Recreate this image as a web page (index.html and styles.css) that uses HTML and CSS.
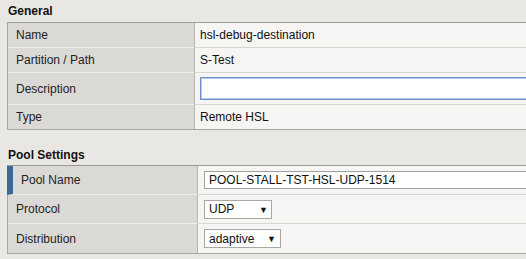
FILE: index.html
```html
<!DOCTYPE html>
<html>
<head>
<meta charset="utf-8">
<link rel="stylesheet" href="styles.css">
</head>
<body>
<div class="page">
  <h2 class="section-title">General</h2>
  <div class="props">
    <div class="row"><div class="label">Name</div><div class="value">hsl-debug-destination</div></div>
    <div class="row"><div class="label">Partition / Path</div><div class="value">S-Test</div></div>
    <div class="row row-tall"><div class="label">Description</div><div class="value"><div class="text-input focus"></div></div></div>
    <div class="row"><div class="label">Type</div><div class="value">Remote HSL</div></div>
  </div>

  <h2 class="section-title second">Pool Settings</h2>
  <div class="props pool">
    <div class="row row-pool"><div class="label required">Pool Name</div><div class="value"><div class="text-input plain">POOL-STALL-TST-HSL-UDP-1514</div></div></div>
    <div class="row row-pool"><div class="label">Protocol</div><div class="value"><div class="select sel-udp"><span>UDP</span><span class="arrow">▼</span></div></div></div>
    <div class="row row-pool"><div class="label">Distribution</div><div class="value"><div class="select sel-dist"><span>adaptive</span><span class="arrow">▼</span></div></div></div>
  </div>
</div>
</body>
</html>
```
FILE: styles.css
```css
* { box-sizing: border-box; }
html, body { margin: 0; padding: 0; }
body {
  background: #e9e7e4;
  font-family: "Liberation Sans", Arial, sans-serif;
  font-size: 12px;
  color: #111;
  overflow: hidden;
  width: 526px;
  height: 259px;
}
.page {
  padding: 0 0 0 7px;
  width: 526px;
  overflow: hidden;
}
.section-title {
  margin: 0;
  font-size: 12px;
  font-weight: bold;
  height: 22px;
  line-height: 22px;
  padding-left: 1px;
  color: #111;
}
.section-title.second {
  margin-top: 19px;
  height: 12px;
  line-height: 12px;
}
.props {
  width: 600px;
  border-top: 1px solid #9d9b98;
  border-left: 1px solid #a9a7a4;
  border-bottom: 1px solid #a9a7a4;
  display: grid;
  grid-template-columns: 187px 1fr;
}
.pool { grid-template-columns: 190px 1fr; margin-top: 4px; }
.row { display: contents; }
.label, .value {
  height: 25px;
  display: flex;
  align-items: center;
  border-bottom: 1px solid #f1f0ee;
}
.label {
  background: #dbd9d6;
  padding-left: 8px;
  color: #222;
  border-right: 1px solid #b9b7b4;
  border-bottom-color: #eeedeb;
}
.value {
  background: #f6f5f3;
  padding-left: 5px;
  border-bottom-color: #d9d6d2;
  color: #111;
}
.row:last-child .label, .row:last-child .value { border-bottom: none; height: 24px; }
.row-tall .label, .row-tall .value { height: 32px; }
.row-pool .label, .row-pool .value { height: 29px; }
.pool .row:last-child .label, .pool .row:last-child .value { height: 29px; }
.pool .value { padding-left: 6px; }
.label.required {
  border-left: 6px solid #3c6898;
  padding-left: 8px;
  margin-left: -1px;
}
.text-input {
  height: 23px;
  width: 400px;
  background: #fff;
}
.text-input.focus {
  border: 1px solid #6b8fc6;
  box-shadow: inset 0 0 0 1px #b7c9e8;
}
.text-input.plain {
  height: 18px;
  border: 1px solid #a3a19e;
  padding-left: 4px;
  line-height: 16px;
  font-size: 12px;
  color: #111;
}
.select {
  height: 19px;
  border: 1px solid #a9a7a4;
  background: #fff;
  display: flex;
  align-items: center;
  padding-left: 4px;
  font-size: 12px;
  position: relative;
}
.select .arrow {
  position: absolute;
  font-size: 9px;
  top: 4px;
}
.sel-udp { width: 68px; }
.sel-udp .arrow { left: 54px; }
.sel-dist { width: 77px; }
.sel-dist .arrow { left: 62px; }
```
